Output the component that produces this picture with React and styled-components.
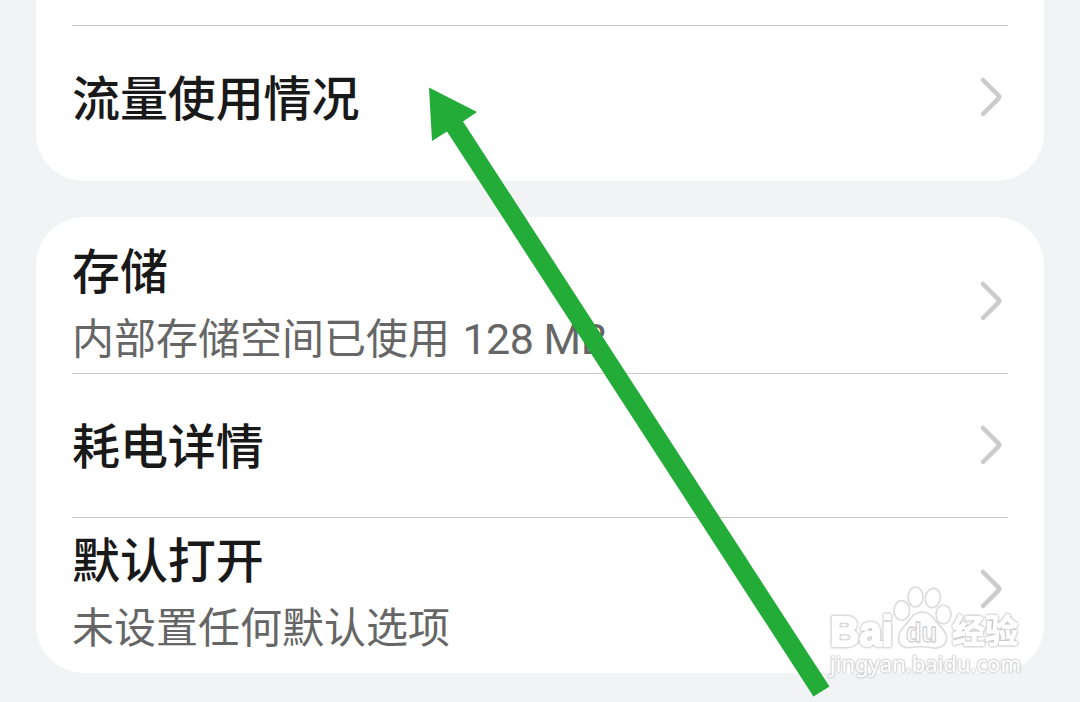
import styled, { createGlobalStyle } from "styled-components";

const GlobalStyle = createGlobalStyle`
  * {
    box-sizing: border-box;
  }

  body {
    margin: 0;
    background: #f1f3f5;
    font-family: "Noto Sans CJK SC", "Noto Sans", sans-serif;
    overflow: hidden;
  }
`;

const Page = styled.main`
  position: relative;
  height: 702px;
  padding: 0 36px;
  display: flex;
  flex-direction: column;
  gap: 36px;
  overflow: hidden;
`;

const Card = styled.section`
  background: #fff;
  padding: ${(props) => (props.$continued ? "25px 36px 12px" : "12px 36px")};
  border-radius: ${(props) => (props.$continued ? "0 0 48px 48px" : "48px")};
`;

const Row = styled.div`
  height: 144px;
  display: flex;
  align-items: center;
  justify-content: space-between;
  border-top: ${(props) => (props.$first ? "none" : "1px solid #cbcbcb")};
`;

const Texts = styled.div`
  display: flex;
  flex-direction: column;
  gap: 6px;
  padding-bottom: ${(props) => (props.$single ? "5px" : "0")};
`;

const Title = styled.div`
  font-size: 48px;
  font-weight: 500;
  line-height: 64px;
  letter-spacing: -0.1px;
  color: #191919;
`;

const Summary = styled.div`
  font-size: 42px;
  line-height: 60px;
  color: #666;
  white-space: nowrap;
`;

const Amount = styled.span`
  margin-left: 3px;
  font-family: Roboto, sans-serif;
  font-size: 43px;
  line-height: 1;
  letter-spacing: -0.5px;
`;

const ChevronIcon = styled.svg`
  width: 36px;
  height: 48px;
  flex: none;
  margin-bottom: 1px;
`;

const Overlay = styled.svg`
  position: absolute;
  top: 0;
  left: 0;
  pointer-events: none;
`;

const Glow = styled.g`
  filter: drop-shadow(0 0 0.8px #b0b0b0) drop-shadow(0 0 0.6px #d0d0d0);
`;

const Chevron = () => (
  <ChevronIcon viewBox="0 0 36 48" fill="none">
    <path
      d="M11 7L26.4 22.4Q28 24 26.4 25.6L11 41"
      stroke="#cbcbcb"
      strokeWidth="4.5"
      strokeLinecap="round"
      strokeLinejoin="round"
    />
  </ChevronIcon>
);

const SettingRow = ({ title, summary, first }) => (
  <Row $first={first}>
    <Texts $single={!summary}>
      <Title>{title}</Title>
      {summary && <Summary>{summary}</Summary>}
    </Texts>
    <Chevron />
  </Row>
);

const Arrow = () => (
  <Overlay width="1080" height="702">
    <path d="M429 87.5L477 112L463 121.5L829.5 686.5L813.5 696.5L447 131.5L432 141Z" fill="#23ac38" />
  </Overlay>
);

const Watermark = () => (
  <Overlay width="1080" height="702" fill="#fff" stroke="#fff" strokeLinejoin="round">
    <Glow strokeWidth="2.4">
      <text x="830" y="646" fontFamily="Liberation Sans" fontWeight="700" fontSize="42" textLength="63" lengthAdjust="spacingAndGlyphs">
        Bai
      </text>
      <text x="952" y="643" fontFamily="Noto Sans CJK SC" fontWeight="700" fontSize="33" strokeWidth="1.2" textLength="66">
        经验
      </text>
    </Glow>
    <g stroke="#dcdcdc" strokeWidth="1.7">
      <ellipse cx="901.8" cy="610.5" rx="7.8" ry="9.8" />
      <ellipse cx="915.5" cy="597" rx="7.5" ry="10" />
      <ellipse cx="932.8" cy="598" rx="7.5" ry="9.7" transform="rotate(10 932.8 598)" />
      <ellipse cx="943.5" cy="614.5" rx="7.5" ry="9.5" />
      <path d="M922 612C914 612 911 618 907 623C902 629 898 632 898.5 639C899 646 905 648.5 911 647.5C918 646.5 926 646.5 933 648C941 649 947 645 946.5 637C946 630 940 627 935 620C931 615 928 612 922 612Z" />
      <text x="906" y="642" fontFamily="Liberation Sans" fontWeight="700" fontSize="27" stroke="#d2d2d2" strokeWidth="1.3" textLength="31" lengthAdjust="spacingAndGlyphs">
        du
      </text>
    </g>
    <Glow strokeWidth="0.3">
      <text x="830" y="672" fontFamily="Noto Sans" fontSize="22" textLength="191" lengthAdjust="spacingAndGlyphs">
        jingyan.baidu.com
      </text>
    </Glow>
  </Overlay>
);

const App = () => {
  return (
    <>
      <GlobalStyle />
      <Page>
        <Card $continued>
          <SettingRow title="流量使用情况" />
        </Card>
        <Card>
          <SettingRow
            title="存储"
            summary={
              <>
                内部存储空间已使用 <Amount>128 MB</Amount>
              </>
            }
            first
          />
          <SettingRow title="耗电详情" />
          <SettingRow title="默认打开" summary="未设置任何默认选项" />
        </Card>
        <Watermark />
        <Arrow />
      </Page>
    </>
  );
};

export default App;
